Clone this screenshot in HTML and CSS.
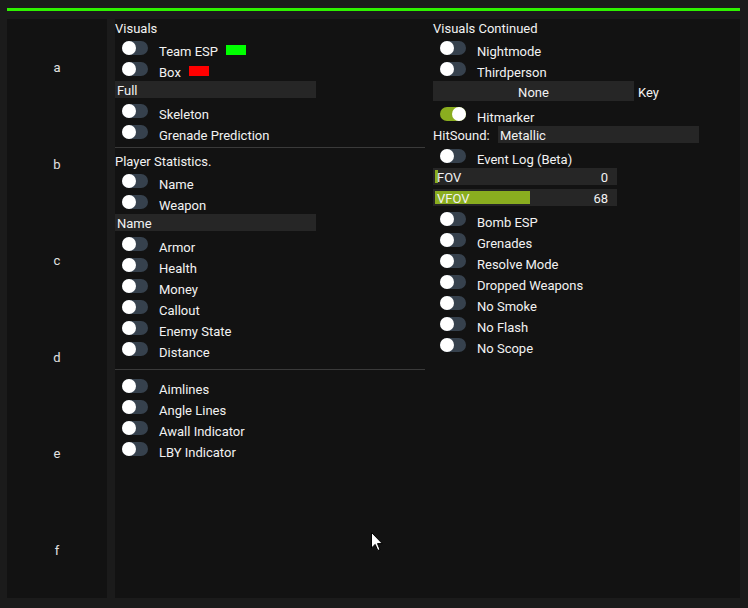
FILE: index.html
```html
<!DOCTYPE html>
<html>
<head>
<meta charset="utf-8">
<link rel="stylesheet" href="styles.css">
</head>
<body>
<div class="app">
  <div class="topbar"></div>
  <div class="frame">
    <nav class="sidebar">
      <div class="tab">a</div>
      <div class="tab">b</div>
      <div class="tab">c</div>
      <div class="tab">d</div>
      <div class="tab">e</div>
      <div class="tab">f</div>
    </nav>
    <main class="panel">
      <div class="col">
        <div class="hdr">Visuals</div>
        <div class="row"><span class="tg"></span><span class="lbl">Team ESP</span><span class="sw sw-green"></span></div>
        <div class="row"><span class="tg"></span><span class="lbl">Box</span><span class="sw sw-red"></span></div>
        <div class="combo">Full</div>
        <div class="row"><span class="tg"></span><span class="lbl">Skeleton</span></div>
        <div class="row"><span class="tg"></span><span class="lbl">Grenade Prediction</span></div>
        <div class="sep sep-a"></div>
        <div class="hdr">Player Statistics.</div>
        <div class="row"><span class="tg"></span><span class="lbl">Name</span></div>
        <div class="row"><span class="tg"></span><span class="lbl">Weapon</span></div>
        <div class="combo">Name</div>
        <div class="row"><span class="tg"></span><span class="lbl">Armor</span></div>
        <div class="row"><span class="tg"></span><span class="lbl">Health</span></div>
        <div class="row"><span class="tg"></span><span class="lbl">Money</span></div>
        <div class="row"><span class="tg"></span><span class="lbl">Callout</span></div>
        <div class="row"><span class="tg"></span><span class="lbl">Enemy State</span></div>
        <div class="row"><span class="tg"></span><span class="lbl">Distance</span></div>
        <div class="sep sep-b"></div>
        <div class="row"><span class="tg"></span><span class="lbl">Aimlines</span></div>
        <div class="row"><span class="tg"></span><span class="lbl">Angle Lines</span></div>
        <div class="row"><span class="tg"></span><span class="lbl">Awall Indicator</span></div>
        <div class="row"><span class="tg"></span><span class="lbl">LBY Indicator</span></div>
      </div>
      <div class="col">
        <div class="hdr">Visuals Continued</div>
        <div class="row"><span class="tg"></span><span class="lbl">Nightmode</span></div>
        <div class="row"><span class="tg"></span><span class="lbl">Thirdperson</span></div>
        <div class="keyrow"><div class="btn">None</div><span class="keylbl">Key</span></div>
        <div class="row"><span class="tg on"></span><span class="lbl">Hitmarker</span></div>
        <div class="field"><span class="flbl">HitSound:</span><div class="combo">Metallic</div></div>
        <div class="row"><span class="tg"></span><span class="lbl">Event Log (Beta)</span></div>
        <div class="slider"><div class="fill" style="width:3px"></div><div class="stext"><span>FOV</span><span>0</span></div></div>
        <div class="slider"><div class="fill" style="width:95px"></div><div class="stext"><span>VFOV</span><span>68</span></div></div>
        <div class="row"><span class="tg"></span><span class="lbl">Bomb ESP</span></div>
        <div class="row"><span class="tg"></span><span class="lbl">Grenades</span></div>
        <div class="row"><span class="tg"></span><span class="lbl">Resolve Mode</span></div>
        <div class="row"><span class="tg"></span><span class="lbl">Dropped Weapons</span></div>
        <div class="row"><span class="tg"></span><span class="lbl">No Smoke</span></div>
        <div class="row"><span class="tg"></span><span class="lbl">No Flash</span></div>
        <div class="row"><span class="tg"></span><span class="lbl">No Scope</span></div>
      </div>
    </main>
  </div>
  <svg class="cursor" width="13" height="20" viewBox="0 0 13 20">
    <path d="M0.5 0.5 L0.5 16 L4.2 12.4 L6.8 18.5 L9 17.6 L6.5 11.6 L11.3 11.6 Z" fill="#ffffff" stroke="#000000" stroke-width="1"/>
  </svg>
</div>
</body>
</html>
```
FILE: styles.css
```css
* { box-sizing: border-box; }
html, body {
  margin: 0;
  padding: 0;
  background: #1b1b1b;
}
body {
  font-family: Roboto, "Liberation Sans", sans-serif;
  font-size: 13px;
  color: #f2f2f2;
}
.app {
  position: relative;
  width: 748px;
  height: 608px;
  padding: 8px 8px 10px 7px;
  display: flex;
  flex-direction: column;
}
.topbar {
  height: 3px;
  background: #2ff200;
  flex: none;
}
.frame {
  margin-top: 8px;
  flex: 1;
  display: grid;
  grid-template-columns: 100px 1fr;
  column-gap: 8px;
  min-height: 0;
}
.sidebar {
  background: #121212;
  display: grid;
  grid-template-rows: repeat(6, 1fr);
}
.tab {
  display: flex;
  align-items: center;
  justify-content: center;
  color: #e2e2e2;
  padding-top: 1px;
}
.panel {
  background: #121212;
  display: grid;
  grid-template-columns: 310px 1fr;
  column-gap: 8px;
  align-items: start;
  overflow: hidden;
}
.col {
  display: flex;
  flex-direction: column;
  gap: 4px;
  white-space: nowrap;
}
.hdr {
  height: 16px;
  line-height: 19px;
}
.row {
  height: 17px;
  display: flex;
  align-items: flex-start;
}
.tg {
  flex: none;
  width: 26px;
  height: 14px;
  margin: 2px 0 0 7px;
  border-radius: 7px;
  background: #36414d;
  display: flex;
  justify-content: flex-start;
}
.tg::before {
  content: "";
  width: 14px;
  height: 14px;
  border-radius: 50%;
  background: #ffffff;
}
.tg.on {
  background: #8aad1f;
  justify-content: flex-end;
}
.lbl {
  margin-left: 11px;
  line-height: 17px;
  padding-top: 4px;
}
.sw {
  width: 20px;
  height: 10px;
  margin: 6px 0 0 8px;
}
.sw-green { background: #00ff00; }
.sw-red { background: #ff0000; }
.combo {
  width: 201px;
  height: 17px;
  line-height: 19px;
  padding-left: 2px;
  background: #262626;
}
.sep {
  height: 1px;
  width: 310px;
  background: #3a3a3a;
}
.sep-a { margin-top: 3px; }
.sep-b { margin-top: 8px; margin-bottom: 3px; }
.keyrow {
  display: flex;
  align-items: flex-start;
  height: 20px;
}
.btn {
  width: 201px;
  height: 20px;
  line-height: 23px;
  background: #262626;
  text-align: center;
}
.keylbl {
  margin-left: 4px;
  line-height: 23px;
}
.field {
  display: flex;
  height: 17px;
}
.flbl {
  width: 65px;
  line-height: 19px;
}
.slider {
  width: 184px;
  height: 17px;
  background: #262626;
  padding: 2px;
  display: grid;
}
.fill {
  grid-area: 1 / 1;
  height: 13px;
  background: #8aad1f;
  justify-self: start;
}
.stext {
  grid-area: 1 / 1;
  display: flex;
  justify-content: space-between;
  padding: 0 7px 0 2px;
  line-height: 15px;
}
.cursor {
  position: absolute;
  left: 371px;
  top: 532px;
}
```
